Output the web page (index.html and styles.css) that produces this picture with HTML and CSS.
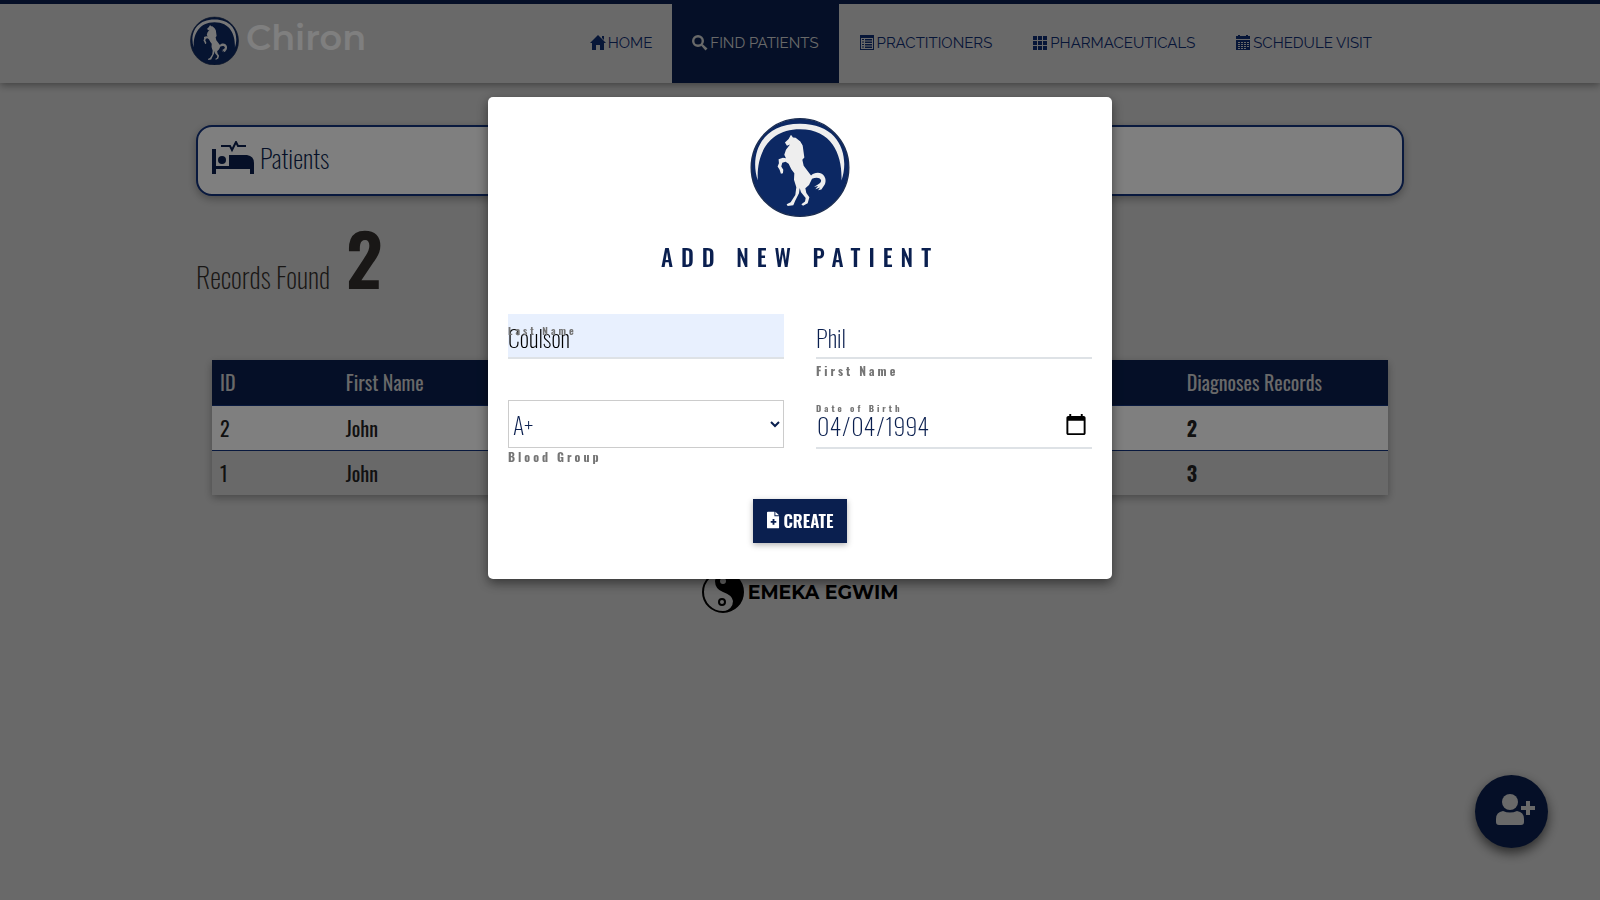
FILE: index.html
```html
<!DOCTYPE html>
<html lang="en">
<head>
<meta charset="UTF-8">
<meta name="viewport" content="width=device-width, initial-scale=1.0">
<title>Chiron</title>
<link rel="stylesheet" href="styles.css">
</head>
<body>
<svg class="sprite" aria-hidden="true">
    <symbol id="horse" viewBox="32 82 298 302">
        <circle cx="181" cy="233" r="146" fill="#0c2863" stroke="#1c2e52" stroke-width="4"/>
        <path fill="#eee" d="M55 272C30 200 60 102 181 102C302 102 330 200 305 272C308 200 280 119 181 119C82 119 50 200 55 272Z"/>
        <path fill="#eee" d="M154 135L160 143L168 144L182 155L189 167L194 203L188 210L192 228L214 257C222 249 236 246 246 252C258 260 260 274 255 284L245 299L235 301L241 293L227 298L235 288L223 291C234 284 245 280 244 271C240 262 228 262 217 267L208 285L197 295L200 309L209 322L204 340L190 347L185 343L196 335L198 324L184 307L180 294L178 310L167 332L161 346L144 348L141 343L153 337L167 315L170 292L163 270L164 250L155 238L147 222L138 216L128 219L125 230L131 240L130 250L124 252L120 240L114 230L118 220L117 208L130 204L139 205L134 195L139 180L151 164L142 168L136 158L147 148Z"/>
    </symbol>
</svg>

<header class="header">
    <a class="brand" href="#">
        <svg class="brand-logo" viewBox="32 82 298 296"><use href="#horse" x="32" y="82" width="298" height="302"/></svg>
        <span>Chiron</span>
    </a>
    <nav class="nav">
        <a href="#">
            <svg viewBox="0 0 16 16"><path d="M8 0L16 8H14V15H10V10H6V15H2V8H0L8 0ZM12 1H14V5L12 3Z"/></svg>
            HOME
        </a>
        <a class="active" href="#">
            <svg viewBox="0 0 16 16"><circle cx="6" cy="6" r="4.800" fill="none" stroke="currentColor" stroke-width="2.400"/><path d="M9 10.500L10.500 9L15.500 13.500L13.500 15.500Z"/></svg>
            FIND PATIENTS
        </a>
        <a href="#">
            <svg viewBox="0 0 16 16"><path fill-rule="evenodd" d="M1 0H15V15H1ZM2 3V14H14V3ZM3 4H5V5H3ZM6 4H13V5.500H6ZM3 6.500H5V7.500H3ZM6 6.500H13V8H6ZM3 9H5V10H3ZM6 9H13V10.500H6ZM3 11.500H5V12.500H3ZM6 11.500H13V13H6Z"/></svg>
            PRACTITIONERS
        </a>
        <a href="#">
            <svg viewBox="0 0 16 16"><path d="M1 1H5V5H1ZM6 1H10V5H6ZM11 1H15V5H11ZM1 6H5V10H1ZM6 6H10V10H6ZM11 6H15V10H11ZM1 11H5V15H1ZM6 11H10V15H6ZM11 11H15V15H11Z"/></svg>
            PHARMACEUTICALS
        </a>
        <a href="#">
            <svg viewBox="0 0 16 16"><path fill-rule="evenodd" d="M1 1H3V0H5V1H11V0H13V1H15V4H1ZM1 5H15V15H1ZM3 7V8H5V7ZM6 7V8H8V7ZM9 7V8H11V7ZM12 7V8H14V7ZM3 9V10H5V9ZM6 9V10H8V9ZM9 9V10H11V9ZM12 9V10H14V9ZM3 11V12H5V11ZM6 11V12H8V11ZM9 11V12H11V11ZM12 11V12H14V11ZM3 13V14H5V13ZM6 13V14H8V13ZM9 13V14H11V13Z"/></svg>
            SCHEDULE VISIT
        </a>
    </nav>
</header>

<main class="content">
    <div class="page-title">
        <svg viewBox="0 0 42 34">
            <path d="M0 8H4V25H38V28H4V33H0ZM17 14H35Q42 15 42 22V33H38V25H17Z"/>
            <circle cx="10" cy="19" r="4"/>
            <path d="M9 5H18L20 9L24 1L26 5H34" fill="none" stroke="currentColor" stroke-width="2"/>
        </svg>
        <h1>Patients</h1>
    </div>
    <p class="records">Records Found <strong>2</strong></p>
    <div class="table-wrap">
        <table>
            <thead>
                <tr>
                    <th class="col-id">ID</th>
                    <th class="col-name">First Name</th>
                    <th></th>
                    <th class="col-records">Diagnoses Records</th>
                </tr>
            </thead>
            <tbody>
                <tr>
                    <td>2</td>
                    <td>John</td>
                    <td></td>
                    <td><b>2</b></td>
                </tr>
                <tr>
                    <td>1</td>
                    <td>John</td>
                    <td></td>
                    <td><b>3</b></td>
                </tr>
            </tbody>
        </table>
    </div>
</main>

<footer class="footer">
    <svg viewBox="0 0 42 42">
        <circle cx="21" cy="21" r="20" fill="none" stroke="#000" stroke-width="2"/>
        <path d="M21 1A20 20 0 0 1 21 41Q31 38 31 30Q30 24 21 21Q13 18 13 10Q14 3 21 1Z"/>
        <circle cx="21" cy="10" r="3" fill="#d3d3d3"/>
        <circle cx="20" cy="31" r="3" fill="none" stroke="#000" stroke-width="2"/>
    </svg>
    <span>EMEKA EGWIM</span>
</footer>

<button class="add-button" type="button" aria-label="Add patient">
    <svg viewBox="0 0 40 32">
        <circle cx="14" cy="8" r="8"/>
        <path d="M7 17Q14 20 21 17Q28 18 28 25V28Q28 31 25 31H3Q0 31 0 28V25Q0 18 7 17ZM30 7H34V12H39V16H34V21H30V16H25V12H30Z"/>
    </svg>
</button>

<div class="overlay">
    <div class="modal" role="dialog" aria-labelledby="modal-title">
        <svg class="modal-logo"><use href="#horse"/></svg>
        <h2 id="modal-title">ADD NEW PATIENT</h2>
        <form>
            <div class="form-grid">
                <div class="field">
                    <label class="label-inside" for="last-name">Last Name</label>
                    <input class="autofilled" type="text" id="last-name" value="Coulson">
                </div>
                <div class="field">
                    <input type="text" id="first-name" value="Phil">
                    <label class="label-below" for="first-name">First Name</label>
                </div>
                <div class="field">
                    <select id="blood-group">
                        <option>A+</option>
                        <option>A-</option>
                        <option>B+</option>
                        <option>B-</option>
                        <option>AB+</option>
                        <option>AB-</option>
                        <option>O+</option>
                        <option>O-</option>
                    </select>
                    <label class="label-below" for="blood-group">Blood Group</label>
                </div>
                <div class="field">
                    <label class="label-above" for="birth-date">Date of Birth</label>
                    <input type="date" id="birth-date" value="1994-04-04">
                </div>
            </div>
            <button class="create" type="button">
                <svg viewBox="0 0 14 18"><path fill-rule="evenodd" d="M1 0H8V5H13V17Q13 18 12 18H1Q0 18 0 17V1Q0 0 1 0ZM9 0L13 4H9ZM6 8V10H4V12H6V14H8V12H10V10H8V8Z"/></svg>
                CREATE
            </button>
        </form>
    </div>
</div>
</body>
</html>
```
FILE: styles.css
```css
* {
    box-sizing: border-box;
}

body {
    margin: 0;
    font-family: "Oswald", "Roboto Condensed", "Liberation Sans Narrow", sans-serif;
    background-color: #d3d3d3;
    color: #222;
}

svg {
    fill: currentColor;
}

.sprite {
    display: none;
}

/* header */
.header {
    display: flex;
    justify-content: space-between;
    height: 83px;
    padding: 0 13% 0 190px;
    border-top: 4px solid #0a1f4f;
    box-shadow: 0 2px 8px rgba(0,0,0,0.4);
}

.brand {
    display: flex;
    gap: 7px;
    margin-top: 12px;
    color: white;
    font: 600 35px/44px "Montserrat", Lato, sans-serif;
    text-decoration: none;
}

.brand-logo {
    width: 49px;
    height: 49px;
}

.nav {
    display: flex;
}

.nav a {
    display: flex;
    align-items: center;
    gap: 2px;
    padding: 0 20px 2px;
    color: #0f2c70;
    font: 15px "Raleway", Lato, sans-serif;
    text-decoration: none;
}

.nav svg {
    width: 16px;
    height: 16px;
}

.nav .active {
    background-color: #0a1f4f;
    color: #d3d3d3;
}

/* page */
.content {
    padding: 42px 196px 0;
}

.page-title {
    display: flex;
    align-items: center;
    gap: 6px;
    height: 71px;
    padding: 0 14px 6px;
    border: 2px solid #12327c;
    border-radius: 16px;
    background: white;
    color: #0a1f4f;
    box-shadow: 0 3px 8px rgba(0,0,0,0.3);
}

.page-title svg {
    width: 42px;
    height: 34px;
}

.page-title h1 {
    margin: 0;
    font-size: 26px;
    font-weight: 200;
}

.records {
    display: flex;
    align-items: baseline;
    gap: 16px;
    margin: 16px 0 38px;
    color: #332f2c;
    font-size: 28px;
    font-weight: 200;
    line-height: 90px;
}

.records strong {
    font-size: 72px;
    font-weight: 600;
}

.table-wrap {
    padding: 0 16px;
}

table {
    width: 100%;
    table-layout: fixed;
    border-collapse: collapse;
    background: white;
    box-shadow: 0 3px 8px rgba(0,0,0,0.3);
    font-size: 20px;
}

th, td {
    height: 45px;
    padding: 0 8px;
    text-align: left;
}

th {
    background-color: #0a1f4f;
    color: #d3d3d3;
    font-weight: 400;
}

tbody tr {
    border-top: 1px solid #12327c;
}

tbody tr:nth-child(even) {
    background-color: #d3d3d3;
}

.col-id {
    width: 10.700%;
}

.col-name {
    width: 14%;
}

.col-records {
    width: 17.800%;
}

.footer {
    display: flex;
    justify-content: center;
    align-items: center;
    gap: 4px;
    margin-top: 76px;
    color: black;
    font: bold 19px "Montserrat", Lato, sans-serif;
}

.footer svg {
    width: 42px;
    height: 42px;
}

.add-button {
    position: fixed;
    right: 52px;
    bottom: 52px;
    width: 73px;
    height: 73px;
    padding: 0 0 0 8px;
    border: none;
    border-radius: 50%;
    background-color: #0a1f4f;
    color: #d3d3d3;
    box-shadow: 0 5px 12px rgba(0,0,0,0.6);
}

.add-button svg {
    width: 40px;
    height: 32px;
}

/* modal */
.overlay {
    position: fixed;
    inset: 0;
    display: flex;
    justify-content: center;
    align-items: flex-start;
    padding-top: 97px;
    background-color: rgba(0,0,0,0.5);
}

.modal {
    width: 39%;
    padding: 20px 20px 36px;
    border-radius: 5px;
    background: white;
    color: #0a1f4f;
    box-shadow: 0 4px 12px rgba(0,0,0,0.5);
    text-align: center;
}

.modal-logo {
    display: block;
    width: 100px;
    height: 101px;
    margin: 0 auto;
}

.modal h2 {
    margin: 23px 0 41px;
    font-size: 23px;
    font-weight: 500;
    line-height: 32px;
    letter-spacing: 8px;
}

.form-grid {
    display: grid;
    grid-template-columns: 1fr 1fr;
    gap: 41px 32px;
    margin-bottom: 50px;
}

.field {
    position: relative;
    text-align: left;
}

.field input, .field select {
    display: block;
    width: 100%;
    height: 45px;
    padding: 2px 0 0;
    border: none;
    border-bottom: 2px solid #dee2e6;
    background: transparent;
    color: #0a1f4f;
    font-family: inherit;
    font-size: 24px;
    font-weight: 200;
}

.field select {
    height: 48px;
    padding: 0;
    border: 1px solid #ccc;
}

.field input[type="date"] {
    height: 49px;
    padding: 2px 2px 0 0;
}

.field .autofilled {
    background-color: #e8f0fe;
    color: black;
}

.field label {
    position: absolute;
    left: 0;
    color: #757575;
    font-size: 12px;
    font-weight: bold;
    line-height: 14px;
    letter-spacing: 3px;
}

.field .label-inside {
    top: 10px;
    font-size: 10px;
}

.field .label-above {
    top: 1px;
    font-size: 9px;
}

.field .label-below {
    top: 100%;
    margin-top: 5px;
}

.field select + .label-below {
    margin-top: 1px;
}

.create {
    display: inline-flex;
    align-items: center;
    gap: 3px;
    height: 44px;
    padding: 0 13px 2px 14px;
    border: none;
    background-color: #0a1f4f;
    color: white;
    box-shadow: 0 2px 6px rgba(0,0,0,0.3);
    font-family: inherit;
    font-size: 17px;
    font-weight: 600;
}

.create svg {
    width: 13px;
    height: 18px;
}
```
